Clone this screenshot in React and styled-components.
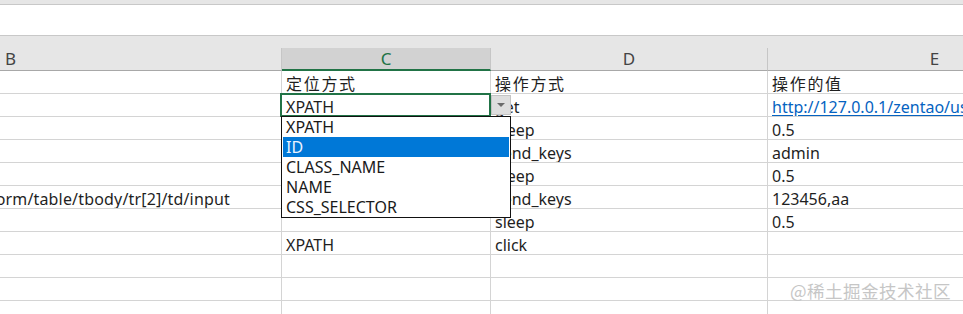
import React from "react";
import styled, { createGlobalStyle, css } from "styled-components";

const GlobalStyle = createGlobalStyle`
  html, body { margin: 0; padding: 0; background: #ffffff; overflow: hidden; }
  * { box-sizing: border-box; }
`;

const FONT = `"Noto Sans", "Noto Sans CJK SC", sans-serif`;
const GRID = "282px 209px 277px 334px";

const Page = styled.div`
  position: relative;
  width: 963px;
  height: 314px;
  overflow: hidden;
  background: #ffffff;
  font-family: ${FONT};
`;

const TopStrip = styled.div`
  height: 5px;
  background: #e6e6e6;
  border-bottom: 1px solid #c8c8c8;
`;

const FormulaBar = styled.div`
  height: 31px;
  background: #ffffff;
  border-bottom: 1px solid #c8c8c8;
`;

const HeaderGap = styled.div`
  height: 12px;
  background: #e6e6e6;
`;

const HeaderRow = styled.div`
  display: grid;
  grid-template-columns: ${GRID};
  height: 23px;
  background: #e6e6e6;
`;

const HeaderCell = styled.div`
  display: flex;
  align-items: flex-end;
  justify-content: ${(p) => (p.$start ? "flex-start" : "center")};
  padding-left: ${(p) => (p.$start ? "5px" : "0")};
  padding-bottom: 2px;
  border-right: 1px solid #c6c6c6;
  border-bottom: 1px solid #a8a8a8;
  font-size: 17px;
  line-height: 18px;
  color: #444444;
  ${(p) =>
    p.$active &&
    css`
      background: #d2d2d2;
      color: #217346;
      border-bottom: 2px solid #217346;
      padding-bottom: 1px;
    `}
`;

const Row = styled.div`
  display: grid;
  grid-template-columns: ${GRID};
  height: 23px;
`;

const Cell = styled.div`
  position: relative;
  display: flex;
  align-items: flex-end;
  justify-content: ${(p) => (p.$end ? "flex-end" : "flex-start")};
  padding: 0 ${(p) => (p.$end ? "51px" : "0")} 0 4px;
  border-right: 1px solid #d4d4d4;
  border-bottom: 1px solid #d4d4d4;
  font-size: 16px;
  line-height: 18px;
  color: #1f1f1f;
  white-space: nowrap;
  overflow: ${(p) => (p.$selected ? "visible" : "hidden")};
  ${(p) =>
    p.$end &&
    css`
      letter-spacing: 0.17px;
    `}
  ${(p) =>
    p.$cjk &&
    css`
      letter-spacing: 1.7px;
    `}
  ${(p) =>
    p.$selected &&
    css`
      &::after {
        content: "";
        position: absolute;
        left: -2px;
        top: -1px;
        right: -1px;
        bottom: -1px;
        border: 2px solid #217346;
        pointer-events: none;
      }
    `}
`;

const CellText = styled.span`
  flex-shrink: 0;
`;

const Link = styled.span`
  flex-shrink: 0;
  color: #0563c1;
  text-decoration: underline;
  text-underline-offset: 2px;
`;

const DropButton = styled.div`
  position: absolute;
  left: 209px;
  top: 1px;
  width: 20px;
  height: 20px;
  background: #dedede;
  border: 1px solid #c4c4c4;
  display: flex;
  align-items: center;
  justify-content: center;
  z-index: 11;
`;

const Arrow = styled.div`
  width: 0;
  height: 0;
  border-left: 4px solid transparent;
  border-right: 4px solid transparent;
  border-top: 4px solid #6a6a6a;
`;

const DropList = styled.div`
  position: absolute;
  left: -1px;
  top: 22px;
  width: 230px;
  height: 102px;
  background: #ffffff;
  border: 1px solid #111111;
  z-index: 10;
  display: flex;
  flex-direction: column;
`;

const DropItem = styled.div`
  height: 20px;
  margin: 0 1px;
  padding-left: 3px;
  font-size: 16px;
  line-height: 20px;
  color: ${(p) => (p.$hover ? "#eaf3ff" : "#1a1a1a")};
  background: ${(p) => (p.$hover ? "#0078d7" : "transparent")};
  letter-spacing: 0;
`;

const Watermark = styled.div`
  position: absolute;
  left: 790px;
  top: 280px;
  font-family: "Noto Sans CJK SC", sans-serif;
  font-size: 17.5px;
  line-height: 22px;
  color: #c6c6c6;
  letter-spacing: 0.5px;
  pointer-events: none;
`;

const options = ["XPATH", "ID", "CLASS_NAME", "NAME", "CSS_SELECTOR"];

const rows = [
  { c: "定位方式", d: "操作方式", e: "操作的值", cjk: true },
  { c: "XPATH", d: "get", e: "http://127.0.0.1/zentao/user-login.html", link: true, selected: true },
  { d: "sleep", e: "0.5" },
  { d: "send_keys", e: "admin" },
  { d: "sleep", e: "0.5" },
  { b: '//*[@id="loginPanel"]/div/form/table/tbody/tr[2]/td/input', d: "send_keys", e: "123456,aa" },
  { d: "sleep", e: "0.5" },
  { c: "XPATH", d: "click" },
  {},
  {},
  {},
];

export default function App() {
  return (
    <>
      <GlobalStyle />
      <Page>
        <TopStrip />
        <FormulaBar />
        <HeaderGap />
        <HeaderRow>
          <HeaderCell $start>B</HeaderCell>
          <HeaderCell $active>C</HeaderCell>
          <HeaderCell>D</HeaderCell>
          <HeaderCell>E</HeaderCell>
        </HeaderRow>
        {rows.map((r, i) => (
          <Row key={i}>
            <Cell $end={!!r.b}>{r.b && <CellText>{r.b}</CellText>}</Cell>
            <Cell $cjk={r.cjk} $selected={r.selected}>
              {r.c && <CellText>{r.c}</CellText>}
              {r.selected && (
                <>
                  <DropButton>
                    <Arrow />
                  </DropButton>
                  <DropList>
                    {options.map((o) => (
                      <DropItem key={o} $hover={o === "ID"}>
                        {o}
                      </DropItem>
                    ))}
                  </DropList>
                </>
              )}
            </Cell>
            <Cell $cjk={r.cjk}>{r.d && <CellText>{r.d}</CellText>}</Cell>
            <Cell $cjk={r.cjk}>
              {r.e && (r.link ? <Link>{r.e}</Link> : <CellText>{r.e}</CellText>)}
            </Cell>
          </Row>
        ))}
        <Watermark>@稀土掘金技术社区</Watermark>
      </Page>
    </>
  );
}
